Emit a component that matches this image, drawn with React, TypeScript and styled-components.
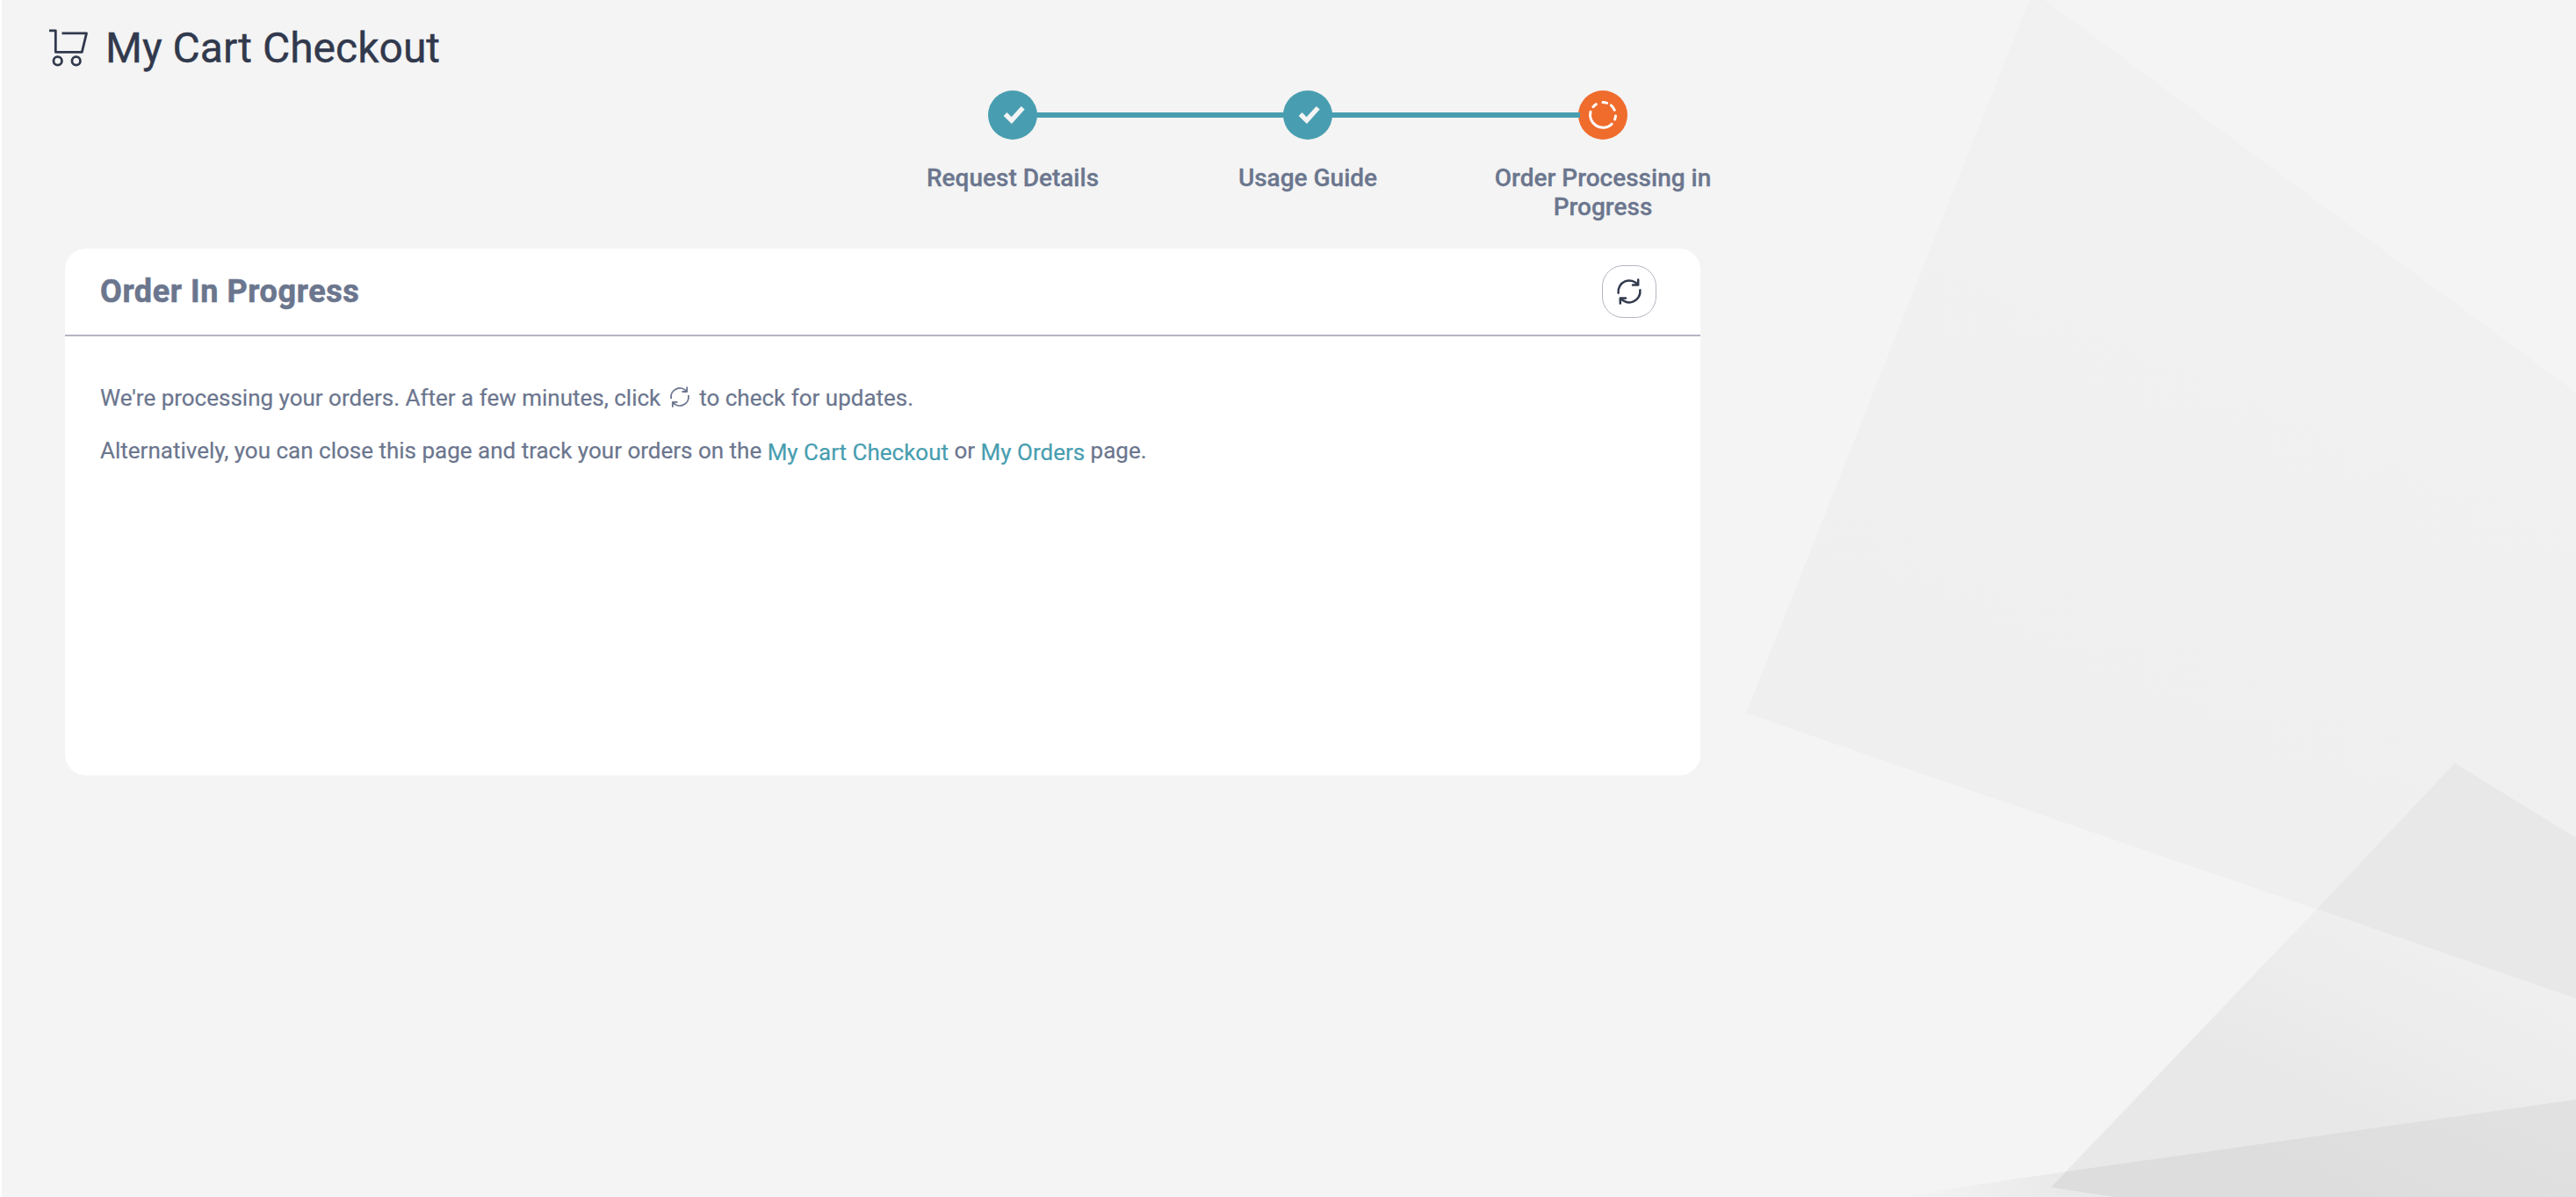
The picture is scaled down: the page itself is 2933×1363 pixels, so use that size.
import type { ReactNode } from 'react'
import styled, { createGlobalStyle } from 'styled-components'

const colors = {
  page: '#f4f4f4',
  teal: '#489eb0',
  orange: '#ef6c2d',
  ink: '#31394d',
  text: '#6b768e',
  line: '#b5b5c3',
}

const GlobalStyle = createGlobalStyle`
  * {
    box-sizing: border-box;
  }

  body {
    margin: 0;
    background: ${colors.page};
    font-family: Roboto, 'Liberation Sans', sans-serif;
  }
`

// Icons
function CartIcon() {
  return (
    <svg width="44" height="44" viewBox="0 0 44 44" fill="none" stroke="currentColor" strokeWidth="2.8">
      <path d="M0 2.8h7.3v24.5h30l5.2-21.4H14.5" strokeLinejoin="round" />
      <circle cx="9.7" cy="37.4" r="4.7" />
      <circle cx="30.7" cy="37.4" r="4.7" />
    </svg>
  )
}

function RefreshIcon({ size, weight }: { size: number; weight: number }) {
  return (
    <svg
      width={size}
      height={size}
      viewBox="-1 0 30 30"
      fill="none"
      stroke="currentColor"
      strokeWidth={weight}
      strokeLinecap="round"
      strokeLinejoin="round"
    >
      <path d="M1.6 16.7A12.6 12.6 0 0 1 24 7.3M24.2 1.4V7.5H18" />
      <path d="M26.4 13.3A12.6 12.6 0 0 1 4 22.6M3.8 28.6V22.4H10" />
    </svg>
  )
}

function CheckIcon() {
  return (
    <svg width="26" height="22" viewBox="0 0 26 22" fill="none" stroke="#f4f4f4" strokeWidth="5.4">
      <path d="M2.6 10l7.2 7.1L22.7 2.7" />
    </svg>
  )
}

function ProgressIcon() {
  return (
    <svg width="34" height="34" viewBox="0 0 34 34" fill="none" stroke="#fff" strokeWidth="3" strokeLinecap="round">
      <path d="M3 13.2A14.5 14.5 0 0 0 27.2 27.2" />
      <path d="M31.5 18A14.5 14.5 0 0 1 30.6 22" />
      <path d="M26.3 5.9A14.5 14.5 0 0 1 30.3 11.3" />
      <path d="M17 2.5A14.5 14.5 0 0 1 21.7 3.3" />
      <path d="M5.9 7.7A14.5 14.5 0 0 1 9.3 4.7" />
    </svg>
  )
}

function BackdropShapes() {
  return (
    <Backdrop viewBox="1933 0 1000 1363" aria-hidden="true">
      <defs>
        <linearGradient id="sheet" gradientUnits="userSpaceOnUse" x1="2480" y1="200" x2="2180" y2="900">
          <stop offset="0" stopColor="#f1f1f1" />
          <stop offset="1" stopColor="#efefef" />
        </linearGradient>
        <linearGradient id="facet" gradientUnits="userSpaceOnUse" x1="2500" y1="1190" x2="2600" y2="975">
          <stop offset="0" stopColor="#e8e8e8" />
          <stop offset="1" stopColor="#f0f0f0" />
        </linearGradient>
        <linearGradient id="floor" gradientUnits="userSpaceOnUse" x1="2700" y1="1363" x2="2760" y2="1230">
          <stop offset="0" stopColor="#dddddd" />
          <stop offset="1" stopColor="#e1e1e1" />
        </linearGradient>
        <linearGradient id="edge" gradientUnits="userSpaceOnUse" x1="2160" y1="1363" x2="2350" y2="1363">
          <stop offset="0" stopColor="#f4f4f4" />
          <stop offset="1" stopColor="#e9e9e9" />
        </linearGradient>
      </defs>
      <polygon points="1988,812 2314.5,-10 2933,447 2933,1137" fill="url(#sheet)" />
      <polygon points="2156,1363 2353,1334 2335,1352 2408,1363" fill="url(#edge)" />
      <polygon points="2335,1352 2638,1035 2933,1137 2933,1363 2408,1363" fill="url(#facet)" />
      <polygon points="2638,1035 2795,869 2933,954 2933,1137" fill="#e8e8e8" />
      <polygon points="2335,1352 2353,1334 2933,1252 2933,1363 2408,1363" fill="url(#floor)" />
    </Backdrop>
  )
}

// Stepper
interface StepProps {
  label: string
  active?: boolean
  children: ReactNode
}

function Step({ label, active, children }: StepProps) {
  return (
    <StepItem>
      <StepBadge $active={active}>{children}</StepBadge>
      <StepLabel>{label}</StepLabel>
    </StepItem>
  )
}

export default function App() {
  return (
    <Page>
      <GlobalStyle />
      <BackdropShapes />
      <PageHeader>
        <CartIcon />
        <PageTitle>My Cart Checkout</PageTitle>
      </PageHeader>
      <Content>
        <Stepper>
          <Step label="Request Details">
            <CheckIcon />
          </Step>
          <Step label="Usage Guide">
            <CheckIcon />
          </Step>
          <Step label="Order Processing in Progress" active>
            <ProgressIcon />
          </Step>
        </Stepper>
        <Card>
          <CardHeader>
            <CardTitle>Order In Progress</CardTitle>
            <RefreshButton aria-label="Refresh">
              <RefreshIcon size={30} weight={2.5} />
            </RefreshButton>
          </CardHeader>
          <CardBody>
            <Message>
              We're processing your orders. After a few minutes, click{' '}
              <InlineIcon>
                <RefreshIcon size={24} weight={2.3} />
              </InlineIcon>{' '}
              to check for updates.
            </Message>
            <Message>
              Alternatively, you can close this page and track your orders on the <TextLink>My Cart Checkout</TextLink> or{' '}
              <TextLink>My Orders</TextLink> page.
            </Message>
          </CardBody>
        </Card>
      </Content>
    </Page>
  )
}

const Page = styled.div`
  position: relative;
  width: 100%;
  height: 1363px;
  overflow: hidden;
  border-left: 2px solid #fff;
  background: ${colors.page};
`

const Backdrop = styled.svg`
  position: absolute;
  top: 0;
  right: 0;
  width: 1000px;
  height: 1363px;
`

const PageHeader = styled.header`
  position: relative;
  display: flex;
  align-items: center;
  gap: 20px;
  height: 108px;
  padding-left: 54px;
  color: ${colors.ink};
`

const PageTitle = styled.h1`
  margin: 2px 0 0;
  font-size: 48px;
  line-height: 56px;
  font-weight: 400;
  -webkit-text-stroke: 0.4px currentColor;
`

const Content = styled.main`
  position: relative;
  width: 1862px;
  margin-left: 72px;
`

const Stepper = styled.ol`
  display: flex;
  width: 1008px;
  margin: -5px 0 0 911px;
  padding: 0;
  height: 180px;
  list-style: none;
`

const StepItem = styled.li`
  position: relative;
  display: flex;
  flex: 0 0 336px;
  flex-direction: column;
  align-items: center;

  /* connector running to the next badge */
  &:not(:last-child)::after {
    content: '';
    position: absolute;
    top: 25px;
    left: 195px;
    width: 283px;
    height: 6px;
    background: ${colors.teal};
    z-index: 1;
  }
`

const StepBadge = styled.div<{ $active?: boolean }>`
  display: flex;
  align-items: center;
  justify-content: center;
  width: 56px;
  height: 56px;
  padding-left: ${(props) => (props.$active ? '0' : '4px')};
  border-radius: 50%;
  background: ${(props) => (props.$active ? colors.orange : colors.teal)};
`

const StepLabel = styled.span`
  width: 270px;
  margin-top: 27px;
  color: ${colors.text};
  font-size: 28px;
  line-height: 33px;
  font-weight: 500;
  text-align: center;
  -webkit-text-stroke: 0.3px currentColor;
`

const Card = styled.section`
  height: 600px;
  border-radius: 24px;
  background: #fff;
`

const CardHeader = styled.header`
  display: flex;
  align-items: center;
  justify-content: space-between;
  height: 100px;
  padding: 0 50px 0 40px;
  border-bottom: 2px solid ${colors.line};
`

const CardTitle = styled.h2`
  margin: 0;
  color: ${colors.text};
  font-size: 36px;
  line-height: 42px;
  font-weight: 700;
  letter-spacing: 0.6px;
  -webkit-text-stroke: 0.6px currentColor;
`

const RefreshButton = styled.button`
  display: flex;
  align-items: center;
  justify-content: center;
  width: 62px;
  height: 60px;
  padding: 0;
  border: 1px solid ${colors.line};
  border-radius: 24px;
  background: #fff;
  color: ${colors.ink};
`

const CardBody = styled.div`
  display: flex;
  flex-direction: column;
  gap: 20px;
  padding: 50px 40px;
`

const Message = styled.p`
  margin: 0;
  color: ${colors.text};
  font-size: 26px;
  line-height: 40px;
  white-space: nowrap;
  -webkit-text-stroke: 0.2px currentColor;
`

const InlineIcon = styled.span`
  display: inline-flex;
  margin: 0 4px 0 3px;
  vertical-align: -2px;
`

const TextLink = styled.a`
  position: relative;
  top: 2px;
  color: ${colors.teal};
  cursor: pointer;
`
